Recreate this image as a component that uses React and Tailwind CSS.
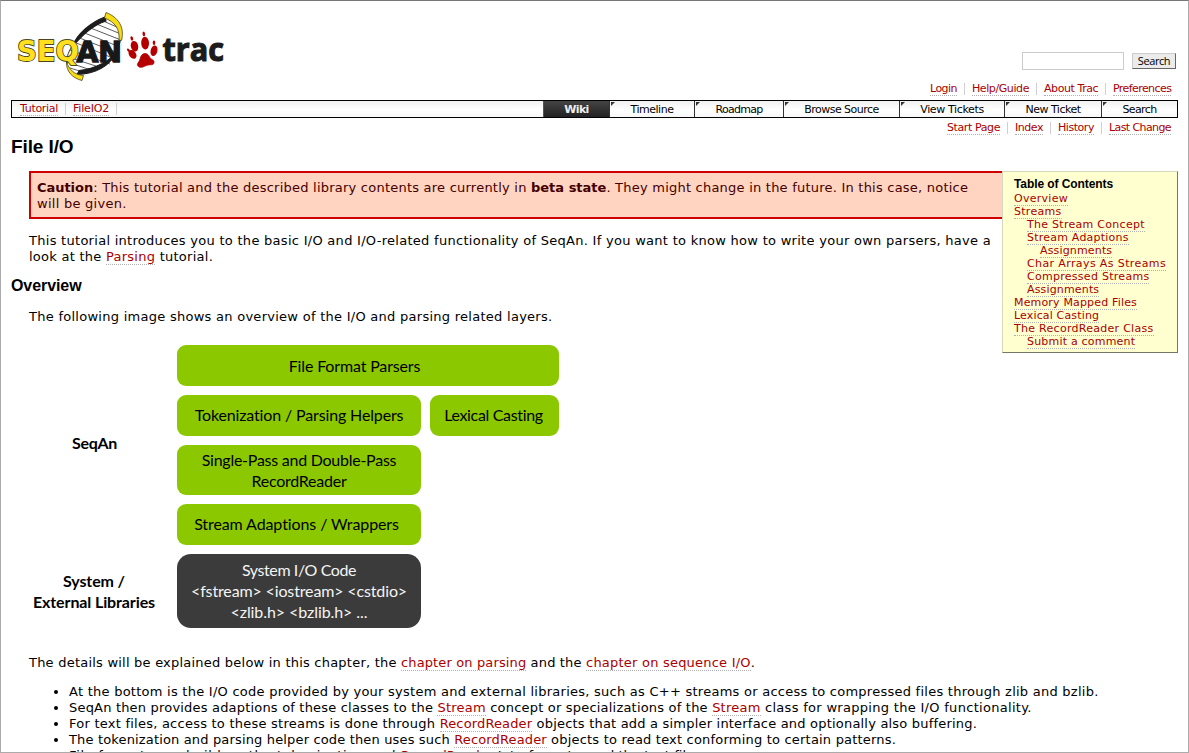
const A = ({ children, className = '' }) => (
  <a className={`border-b border-dotted border-[#b0b0b0] text-[#aa0000] ${className}`}>{children}</a>
)

function Logo() {
  return (
    <svg className="block h-[80px] w-[220px]" viewBox="10 5 220 80">
      <path d="M105 17C86 23 73 38 67 54C66 63 70 70 77 73C96 72 112 60 118 42C121 29 115 21 105 17Z" fill="#fff" />
      <g stroke="#333" strokeWidth="0.8">
        <path d="M101 20L119 28M94 23L121 34M88 27L121 40M82 32L120 47M77 37L118 53M74 42L115 59M70 50L110 64M68 57L102 68M67 62L94 71M70 68L86 73" />
      </g>
      <path d="M105 17C91 22 77 34 72 47C78 41 88 27 106 21Z" fill="#1c1c1c" stroke="#1c1c1c" strokeWidth="1.200" />
      <path d="M72 46C68 53 66 58 67 64" fill="none" stroke="#333" strokeWidth="1" />
      <path d="M77 74.500C96 74 110 66 117 52C110 60 96 69 79 70.500Z" fill="#1c1c1c" stroke="#1c1c1c" strokeWidth="1" />
      <path d="M116 50C119 46 120 43 121 38" fill="none" stroke="#333" strokeWidth="1" />
      <path d="M106 12.500C118 17 125 27 121.500 40.500L119 40C120 29 115 22 104.500 18Z" fill="#f7dc14" stroke="#4a4520" strokeWidth="0.8" />
      <text x="76.500" y="61.500" textLength="45.500" lengthAdjust="spacingAndGlyphs" fontFamily="DejaVu Sans, sans-serif" fontWeight="700" fontSize="29" fill="#181818" stroke="#181818" strokeWidth="1.400">AN</text>
      <text x="17" y="61.300" textLength="62" lengthAdjust="spacingAndGlyphs" fontFamily="DejaVu Sans, sans-serif" fontWeight="700" fontSize="29" fill="#ffe01e" stroke="#4a4520" strokeWidth="1.800" paintOrder="stroke">SEQ</text>
      <path d="M66.500 62C69 69 74 75 83.500 75.500L82 80.500C72 78 66 71 66.500 62Z" fill="#f7dc14" stroke="#4a4520" strokeWidth="0.8" />
      <g fill="#b50000">
        <ellipse cx="134.500" cy="46.200" rx="3.700" ry="5.400" transform="rotate(-14 134.500 46.200)" />
        <ellipse cx="145.100" cy="43.200" rx="3.900" ry="6.400" transform="rotate(-3 145.100 43.200)" />
        <ellipse cx="154" cy="50.700" rx="3.400" ry="5.400" transform="rotate(14 154 50.700)" />
        <ellipse cx="132.500" cy="54.300" rx="3.400" ry="4.900" transform="rotate(-38 132.500 54.300)" />
        <ellipse cx="131.800" cy="38.400" rx="1.300" ry="2.300" transform="rotate(-15 131.800 38.400)" />
        <ellipse cx="143.800" cy="34" rx="1.300" ry="2.400" transform="rotate(-10 143.800 34)" />
        <ellipse cx="154" cy="42.700" rx="1.300" ry="2.300" />
        <ellipse cx="128.500" cy="50.200" rx="1.100" ry="2" transform="rotate(-40 128.500 50.200)" />
        <path d="M143 54C146 52.500 148.500 54.500 149.500 57C151 60 154.500 59.500 154 62.500C153.500 66 150 64 146.500 65.500C143.500 66.500 141 68.500 138.500 66.500C136 64.500 138.500 62.500 139.500 60.500C140.500 58 140.500 55.500 143 54Z" stroke="#b50000" strokeWidth="0.800" />
      </g>
      <text x="162.500" y="61" textLength="61.500" lengthAdjust="spacingAndGlyphs" fontFamily="Open Sans, sans-serif" fontWeight="700" fontSize="31.500" fill="#1c1c1c" stroke="#1c1c1c" strokeWidth="1.100">trac</text>
    </svg>
  )
}

function NavLinks({ items, className }) {
  return (
    <ul className={`flex items-center justify-end whitespace-nowrap text-[11px] leading-[12px] ${className}`}>
      {items.map(([label, cls], i) => (
        <li key={label} className={`flex h-[12px] pl-[7px] pr-[7px] ${i < items.length - 1 ? 'border-r border-[#d0d0d0]' : ''}`}>
          <A className={`block h-[13px] ${cls}`}>{label}</A>
        </li>
      ))}
    </ul>
  )
}

const meta = [
  ['Login', 'w-[27px] tracking-[-0.537px]'],
  ['Help/Guide', 'w-[57px] tracking-[-0.409px]'],
  ['About Trac', 'w-[54px] tracking-[-0.42px]'],
  ['Preferences', 'w-[58px] tracking-[-0.58px]'],
]
const ctx = [
  ['Start Page', 'w-[53px] tracking-[-0.4px]'],
  ['Index', 'w-[28px] tracking-[-0.459px]'],
  ['History', 'w-[36px] tracking-[-0.449px]'],
  ['Last Change', 'w-[62px] tracking-[-0.594px]'],
]
const tabs = [
  ['Timeline', 'w-[85px] tracking-[-0.473px]'],
  ['Roadmap', 'w-[89px] tracking-[-0.721px]'],
  ['Browse Source', 'w-[116px] tracking-[-0.526px]'],
  ['View Tickets', 'w-[105px] tracking-[-0.365px]'],
  ['New Ticket', 'w-[97px] tracking-[-0.505px]'],
  ['Search', 'w-[76px] tracking-[-0.633px]'],
]
const toc = [
  ['Overview', ''],
  ['Streams', ''],
  ['The Stream Concept', 'pl-[13px]'],
  ['Stream Adaptions', 'pl-[13px] tracking-[0.22px]'],
  ['Assignments', 'pl-[26px] tracking-[0.16px]'],
  ['Char Arrays As Streams', 'pl-[13px] tracking-[0.384px]'],
  ['Compressed Streams', 'pl-[13px]'],
  ['Assignments', 'pl-[13px] tracking-[0.16px]'],
  ['Memory Mapped Files', 'tracking-[0.167px]'],
  ['Lexical Casting', 'tracking-[0.15px]'],
  ['The RecordReader Class', ''],
  ['Submit a comment', 'pl-[13px] tracking-[0.2px]'],
]

const Box = ({ className, children }) => (
  <div className={`flex flex-col items-center justify-center rounded-[9px] bg-[#8bc800] text-center text-[16px] leading-[21px] text-black ${className}`}>{children}</div>
)

function Diagram() {
  return (
    <div className="mt-[20px] flex flex-col gap-[8px] whitespace-nowrap font-[Lato,sans-serif]">
      <div className="flex h-[201px]">
        <div className="flex w-[148px] items-center justify-center pb-[5px] pr-[17px] text-[16px] font-bold tracking-[-0.3px]">SeqAn</div>
        <div className="flex flex-col gap-[9px]">
          <Box className="h-[41px] w-[382px] pr-[27px] tracking-[-0.155px]">File Format Parsers</Box>
          <div className="flex gap-[9px]">
            <Box className="h-[41px] w-[244px] pb-[2px] tracking-[-0.144px]">Tokenization / Parsing Helpers</Box>
            <Box className="h-[41px] w-[129px] pb-[2px] pr-[2px] tracking-[-0.328px]">Lexical Casting</Box>
          </div>
          <Box className="h-[50px] w-[244px] tracking-[-0.255px]"><span>Single-Pass and Double-Pass</span><span>RecordReader</span></Box>
          <Box className="h-[41px] w-[244px] pb-[2px] pr-[5px] tracking-[-0.101px]">Stream Adaptions / Wrappers</Box>
        </div>
      </div>
      <div className="flex h-[74px]">
        <div className="flex w-[148px] flex-col items-center justify-center pr-[18px] text-[16px] font-bold leading-[21px] tracking-[-0.112px]"><span>System /</span><span>External Libraries</span></div>
        <div className="flex w-[244px] flex-col items-center justify-center rounded-[14px] bg-[#3b3b3b] pb-px text-[16px] leading-[21px] text-[#f4f4f4]">
          <span className="tracking-[-0.412px]">System I/O Code</span>
          <span className="tracking-[-0.14px]">&lt;fstream&gt; &lt;iostream&gt; &lt;cstdio&gt;</span>
          <span className="tracking-[-0.07px]">&lt;zlib.h&gt; &lt;bzlib.h&gt; ...</span>
        </div>
      </div>
    </div>
  )
}

export default function App() {
  return (
    <div className="h-[753px] w-[1189px] overflow-hidden border border-[#ababab] border-t-[#777] bg-white px-[10px] font-['DejaVu_Sans',Verdana,sans-serif] text-black">
      <header className="flex h-[79px] justify-between">
        <div className="-ml-px mt-[4px]"><Logo /></div>
        <form className="flex items-center gap-[8px] self-start pr-[2px] pt-[51px]">
          <input className="h-[18px] w-[102px] border border-[#ccc] bg-white" />
          <button type="button" className="h-[16px] w-[44px] border border-[#ccc] border-b-[#666] border-r-[#666] bg-[#ebebeb] font-['Open_Sans',sans-serif] text-[11px] leading-[14px] tracking-[-0.4px]">Search</button>
        </form>
      </header>
      <NavLinks items={meta} className="h-[17px]" />
      <nav className="mt-[3px] flex h-[18px] items-stretch justify-between border border-black bg-linear-to-b from-[#f0f0f0] via-white via-55% to-[#f8f8f8] text-[11px] leading-[17px]">
        <ul className="flex items-center leading-[12px]">
          <li className="flex h-[12px] border-r border-[#d0d0d0] pl-[8px] pr-[7px]"><A className="block h-[13px] w-[38px] tracking-[-0.307px]">Tutorial</A></li>
          <li className="flex h-[12px] border-r border-[#d0d0d0] px-[7px]"><A className="block h-[13px] w-[36px] tracking-[-0.188px]">FileIO2</A></li>
        </ul>
        <ul className="flex text-center">
          <li className="w-[66px] border-l border-[#555] bg-linear-to-b from-[#444] via-[#333] via-50% to-[#222] font-bold tracking-[-0.625px] text-[#eee]"><span className="block leading-[18px]">Wiki</span></li>
          {tabs.map(([label, cls]) => (
            <li key={label} className={`relative border-l border-[#333] ${cls}`}>
              <svg className="absolute left-px top-px h-[4px] w-[4px]" viewBox="0 0 4 4"><path d="M0 0H4L0 4Z" fill="#333" /></svg>
              <span className="block leading-[18px]">{label}</span>
            </li>
          ))}
        </ul>
      </nav>
      <NavLinks items={ctx} className="h-[19px]" />
      <h1 className="h-[34px] font-['Liberation_Sans',Arial,sans-serif] text-[19px] font-bold leading-[19px] tracking-[-0.107px]">File I/O</h1>

      <aside className="float-right h-[182px] w-[176px] whitespace-nowrap border border-[#d7d7c0] border-b-[#776] border-r-[#776] bg-[#ffffd0] pl-[11px] pt-[6px]">
        <h4 className="h-[14px] font-['Liberation_Sans',Arial,sans-serif] text-[12px] font-bold leading-[13px] tracking-[-0.085px]">Table of Contents</h4>
        <ol className="text-[11px] leading-[13px] tracking-[0.28px]">
          {toc.map(([label, cls], i) => (
            <li key={i} className={`h-[13px] ${cls}`}><A>{label}</A></li>
          ))}
        </ol>
      </aside>

      <main className="whitespace-nowrap text-[13px] leading-[16px] tracking-[0.26px]">
        <div className="ml-[18px] h-[48px] border-2 border-[#d00000] bg-[#ffd4c0] p-[6px] pt-[7px] text-[#440000]">
          <p className="tracking-[0.23px]"><b className="tracking-[-0.04px]">Caution</b>: This tutorial and the described library contents are currently in <b className="tracking-[0px]">beta state</b><span className="tracking-[0.225px]">. They might change in the future. In this case, notice</span></p>
          <p>will be given.</p>
        </div>
        <div className="ml-[18px] mt-[14px]">
          <p className="tracking-[0.282px]">This tutorial introduces you to the basic I/O and I/O-related functionality of SeqAn. If you want to know how to write your own parsers, have a</p>
          <p>look at the <A>Parsing</A> tutorial.</p>
        </div>
        <h2 className="mt-[12px] font-['Liberation_Sans',Arial,sans-serif] text-[16px] font-bold leading-[18px] tracking-[-0.082px]">Overview</h2>
        <div className="ml-[18px]">
          <p className="mt-[14px] tracking-[0.27px]">The following image shows an overview of the I/O and parsing related layers.</p>
          <Diagram />
          <p className="mt-[27px] tracking-[0.17px]"><span className="tracking-[0.22px]">The details will be explained below in this chapter, the </span><A className="tracking-[0.13px]">chapter on parsing</A> and the <A className="tracking-[0.22px]">chapter on sequence I/O</A>.</p>
          <ul className="mt-[13px] list-disc pl-[40px]">
            <li className="tracking-[0.253px]">At the bottom is the I/O code provided by your system and external libraries, such as C++ streams or access to compressed files through zlib and bzlib.</li>
            <li className="tracking-[0.23px]"><span className="tracking-[0.19px]">SeqAn then provides adaptions of these classes to the </span><A>Stream</A> <span className="tracking-[0.2px]">concept or specializations of the </span><A>Stream</A><span className="tracking-[0.3px]"> class for wrapping the I/O functionality.</span></li>
            <li className="tracking-[0.2px]"><span className="tracking-[0.24px]">For text files, access to these streams is done through </span><A className="tracking-[0.14px]">RecordReader</A> objects that add a simpler interface and optionally also buffering.</li>
            <li className="tracking-[0.18px]"><span className="tracking-[0.155px]">The tokenization and parsing helper code then uses such </span><A className="tracking-[0.14px]">RecordReader</A> <span className="tracking-[0.2px]">objects to read text conforming to certain patterns.</span></li>
            <li className="tracking-[0.05px]"><span className="tracking-[0.69px]">File formats are build on the tokenization and </span><A className="tracking-[0.14px]">RecordReader</A> Interfaces to read the text files.</li>
          </ul>
        </div>
      </main>
    </div>
  )
}
